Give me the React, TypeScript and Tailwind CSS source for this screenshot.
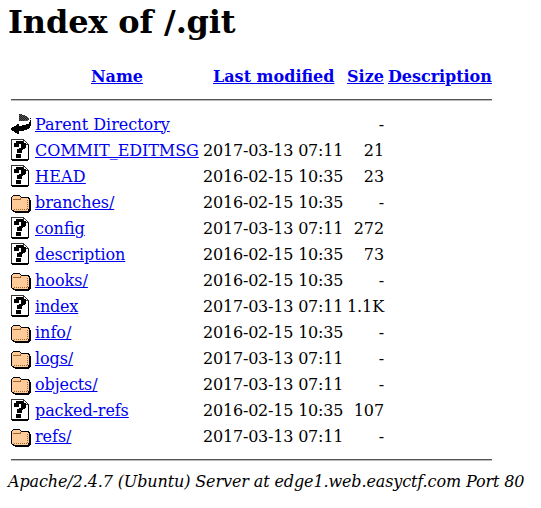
type Kind = 'back' | 'unknown' | 'folder';

const entries: { kind: Kind; name: string; date?: string; size: string; tracking: string }[] = [
  { kind: 'back', name: 'Parent Directory', size: '-', tracking: 'tracking-[-0.03px]' },
  { kind: 'unknown', name: 'COMMIT_EDITMSG', date: '2017-03-13 07:11', size: '21', tracking: 'tracking-[-0.07px]' },
  { kind: 'unknown', name: 'HEAD', date: '2016-02-15 10:35', size: '23', tracking: 'tracking-[0.2px]' },
  { kind: 'folder', name: 'branches/', date: '2016-02-15 10:35', size: '-', tracking: 'tracking-[-0.1px]' },
  { kind: 'unknown', name: 'config', date: '2017-03-13 07:11', size: '272', tracking: 'tracking-normal' },
  { kind: 'unknown', name: 'description', date: '2016-02-15 10:35', size: '73', tracking: 'tracking-[-0.1px]' },
  { kind: 'folder', name: 'hooks/', date: '2016-02-15 10:35', size: '-', tracking: 'tracking-normal' },
  { kind: 'unknown', name: 'index', date: '2017-03-13 07:11', size: '1.1K', tracking: 'tracking-[-0.2px]' },
  { kind: 'folder', name: 'info/', date: '2016-02-15 10:35', size: '-', tracking: 'tracking-normal' },
  { kind: 'folder', name: 'logs/', date: '2017-03-13 07:11', size: '-', tracking: 'tracking-[-0.1px]' },
  { kind: 'folder', name: 'objects/', date: '2017-03-13 07:11', size: '-', tracking: 'tracking-[-0.1px]' },
  { kind: 'unknown', name: 'packed-refs', date: '2016-02-15 10:35', size: '107', tracking: 'tracking-[-0.1px]' },
  { kind: 'folder', name: 'refs/', date: '2017-03-13 07:11', size: '-', tracking: 'tracking-[-0.05px]' },
];

function Icon({ kind }: { kind: Kind }) {
  return (
    <svg width="20" height="22" viewBox="0 0 20 22" shapeRendering="crispEdges" className="block">
      {kind === 'back' && (
        <>
          <path fill="#555" d="M8 1h3v1h3v1h2v1h1v1h1v2h-1v1H8z" />
          <path stroke="#222" strokeDasharray="1 1" fill="none" d="M8 1.5h4M9 2.5h5M8 3.5h8M9 4.5h8M8 5.5h9M9 6.5h9M8 7.5h6M8.5 1v7" />
          <path fill="#000" d="M19 5h1v8h-1v2h-1v1h-2v1h-3v1H8v3H6v-1H4v-1H3v-1H1v-1H0v-2h1v-1h2v-1h2v-1h1v-1h2v2h3v-1h4v-1h3V9h1V7h1z" />
        </>
      )}
      {kind === 'unknown' && (
        <>
          <path fill="#fff" d="M0 0h13l5 5v16H0z" />
          <path fill="#333" d="M0 0h13v1H1v20H0z" />
          <path fill="#000" d="M0 20h17V6h1v15h-1v1H1v-1H0z" />
          <path fill="#333" d="M12 0h1v1h1v1h1v1h1v1h1v1h1v1h-5V5h-1z" />
          <path fill="#fff" d="M13 2h1v1h1v1h1v1h-3z" />
          <path fill="#000" d="M5 2h7v1h1v1h2v5h-1v1h-2v1h-1v3H6v-4h2V9h2V5H8v3H3V4h2zM5 15h5v4H5z" />
        </>
      )}
      {kind === 'folder' && (
        <>
          <path fill="#000" d="M2 4h7v1h1v1h8v1h1v2h1v11h-1v1h-1v1H4v-1H2v-1H1v-1H0V6h1V5h1z" />
          <path fill="#ffcc99" d="M2 5h7v1h1v1h7v1h1v10h-1v2H3v-1H1V6h1z" />
          <path fill="#996633" d="M2 8h7V7h1v2H2z" />
          <path stroke="#996633" strokeDasharray="1 1" fill="none" d="M3 18.5h14M16.5 9v10" />
        </>
      )}
    </svg>
  );
}

const link = 'text-[#0000ee] underline';

export default function App() {
  return (
    <main className="h-[508px] w-[541px] overflow-hidden bg-white px-2 font-['DejaVu_Serif',serif] text-base leading-[19px] text-black">
      <h1 className="h-[65px] pt-[3px] text-[32px] leading-[38px] font-bold tracking-[-0.15px]">Index of /.git</h1>
      <div className="ml-[3px] w-[481px]">
        <div className="grid h-[34px] grid-cols-[24px_168px_144px_41px_104px] pt-0.5 font-bold whitespace-nowrap">
          <span />
          <a className={`${link} justify-self-center -ml-1`}>Name</a>
          <a className={`${link} ml-2.5 justify-self-start`}>Last modified</a>
          <a className={link}>Size</a>
          <a className={`${link} justify-self-start tracking-[-0.04px]`}>Description</a>
        </div>
        <div className="h-0.5 border-t border-[#555] bg-[#bbb]" />
        <div className="mt-[11px] mb-[11px] flex flex-col gap-0.5">
          {entries.map((e) => (
            <div key={e.name} className="grid h-6 grid-cols-[24px_168px_144px_37px] items-center whitespace-nowrap">
              <Icon kind={e.kind} />
              <a className={`${link} ${e.tracking} justify-self-start`}>{e.name}</a>
              <span className="tracking-[-0.2px]">{e.date}</span>
              <span className="text-right tracking-[-0.1px]">{e.size}</span>
            </div>
          ))}
        </div>
        <div className="h-0.5 border-t border-[#555] bg-[#bbb]" />
      </div>
      <address className="mt-[11px] whitespace-nowrap italic tracking-[-0.12px]">Apache/2.4.7 (Ubuntu) Server at edge1.web.easyctf.com Port 80</address>
    </main>
  );
}
